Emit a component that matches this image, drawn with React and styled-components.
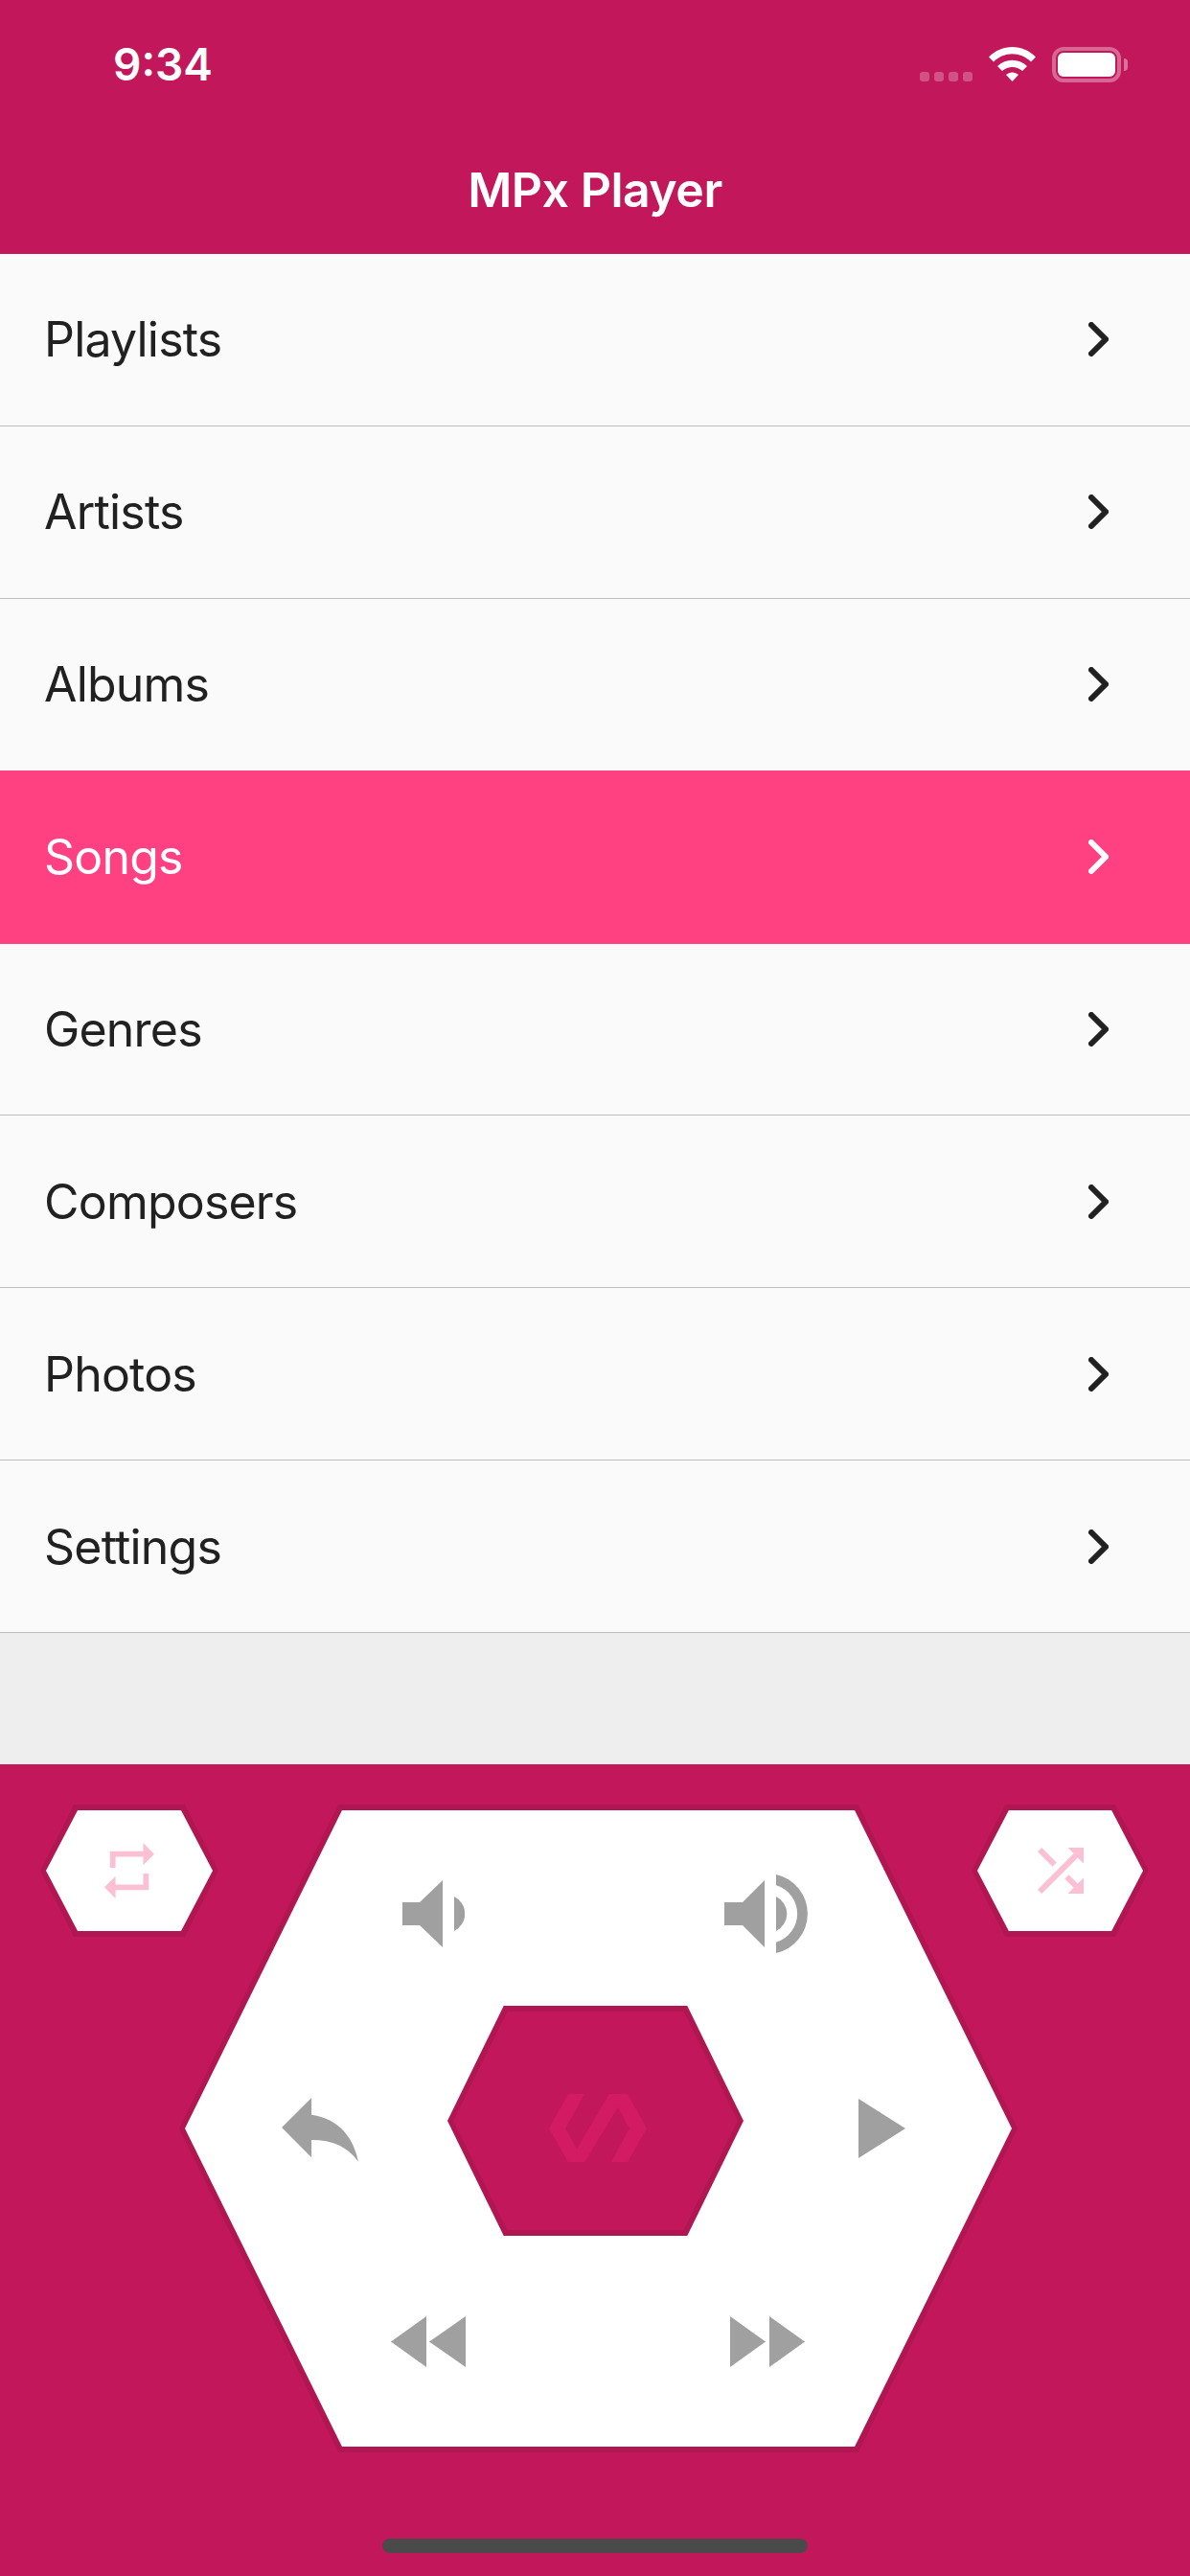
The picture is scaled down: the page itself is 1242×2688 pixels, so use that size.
import styled, { createGlobalStyle } from 'styled-components'

const GlobalStyle = createGlobalStyle`
  html, body {
    margin: 0;
    padding: 0;
    background: #eeeeee;
  }
  * { box-sizing: border-box; }
`

const Screen = styled.div`
  display: flex;
  flex-direction: column;
  width: 1242px;
  height: 2688px;
  overflow: hidden;
  font-family: Inter, "Liberation Sans", sans-serif;
  color: #212121;
  background: #eeeeee;
`

const Header = styled.header`
  display: flex;
  flex-direction: column;
  height: 265px;
  flex-shrink: 0;
  background: #c2185b;
  color: #fff;
`

const StatusBar = styled.div`
  display: flex;
  align-items: center;
  height: 134px;
  padding: 0 65px 0 118px;
`

const Time = styled.span`
  font-size: 46px;
  font-weight: 600;
  line-height: 1;
  flex: 1;
`

const Dots = styled.div`
  display: flex;
  gap: 5px;
  margin: 26px 17px 0 0;
`

const Dot = styled.i`
  display: block;
  width: 10px;
  height: 10px;
  border-radius: 3px;
  background: rgba(255, 255, 255, 0.25);
`

const Battery = styled.div`
  display: flex;
  align-items: center;
  width: 72px;
  height: 37px;
  margin-left: 17px;
  padding: 2px;
  border: 4px solid rgba(255, 255, 255, 0.35);
  border-radius: 12px;
`

const BatteryFill = styled.div`
  width: 100%;
  height: 100%;
  border-radius: 6px;
  background: #fff;
`

const BatteryNub = styled.div`
  width: 4px;
  height: 13px;
  margin-left: 3px;
  border-radius: 0 4px 4px 0;
  background: rgba(255, 255, 255, 0.4);
`

const Title = styled.h1`
  margin: 0;
  height: 131px;
  font-size: 50px;
  font-weight: 600;
  line-height: 128px;
  letter-spacing: -0.5px;
  text-align: center;
`

const Menu = styled.nav`
  display: flex;
  flex-direction: column;
  flex-shrink: 0;
`

const Row = styled.div`
  display: flex;
  align-items: center;
  justify-content: space-between;
  height: ${(props) => (props.$active ? '180.875px' : '179.875px')};
  margin-top: ${(props) => (props.$active ? '-1px' : '0')};
  padding: 0 85px 0 46px;
  border-bottom: 1px solid ${(props) => (props.$active ? '#ff4081' : '#bdbdbd')};
  background: ${(props) => (props.$active ? '#ff4081' : '#fafafa')};
  color: ${(props) => (props.$active ? '#fff' : '#212121')};
  font-size: 50px;
  letter-spacing: -0.8px;
  line-height: 1;
`

const Spacer = styled.div`
  flex: 1;
`

const Panel = styled.section`
  display: flex;
  flex-direction: column;
  align-items: center;
  height: 847px;
  flex-shrink: 0;
  padding-top: 42px;
  background: #c2185b;
`

const Deck = styled.div`
  display: flex;
  align-items: flex-start;
  width: 100%;
  padding-left: 42px;
`

const Hex = styled.div`
  width: ${(props) => props.$w}px;
  height: ${(props) => props.$h}px;
  margin-left: ${(props) => props.$ml || 0}px;
  flex-shrink: 0;
  padding: 6px;
  background: #b01651;
  clip-path: polygon(19% 0, 81% 0, 100% 50%, 81% 100%, 19% 100%, 0 50%);
`

const HexFace = styled.div`
  display: flex;
  flex-direction: column;
  align-items: center;
  justify-content: center;
  width: 100%;
  height: 100%;
  background: ${(props) => props.$color || '#fff'};
  clip-path: polygon(19% 0, 81% 0, 100% 50%, 81% 100%, 19% 100%, 0 50%);
`

const BigFace = styled(HexFace)`
  align-items: stretch;
  justify-content: flex-start;
`

const VolumeRow = styled.div`
  display: flex;
  align-items: center;
  gap: 271px;
  height: 82px;
  margin-top: 67px;
  padding-left: 227px;
`

const MiddleRow = styled.div`
  display: flex;
  align-items: center;
  height: 240px;
  margin-top: 55px;
  padding-left: 101px;
`

const SkipRow = styled.div`
  display: flex;
  gap: 276px;
  margin-top: 84px;
  padding-left: 215px;
`

const Glyph = styled.svg`
  display: block;
  flex-shrink: 0;
  fill: ${(props) => props.$fill || '#a0a0a0'};
  margin: ${(props) => props.$margin || '0'};
`

const HomeBar = styled.div`
  width: 444px;
  height: 15px;
  margin-top: 90px;
  border-radius: 8px;
  background: #4a4a4a;
`

function Chevron() {
  return (
    <svg width="21" height="36" viewBox="0 0 21 36">
      <polyline
        points="3,3 18,18 3,33"
        fill="none"
        stroke="currentColor"
        strokeWidth="6"
        strokeLinecap="round"
      />
    </svg>
  )
}

function Wifi() {
  return (
    <svg width="49" height="36" viewBox="0 0 49 36" fill="#fff">
      <path d="M0 10.5C13.5 -3.5 35.5 -3.5 49 10.5L44 15.5C33 4.5 16 4.5 5 15.5Z" />
      <path d="M9 20C18 11.5 31 11.5 40 20L35 25C28.5 19.5 20.5 19.5 14 25Z" />
      <path d="M18 29C22 25.5 27 25.5 31 29L24.5 36Z" />
    </svg>
  )
}

const items = ['Playlists', 'Artists', 'Albums', 'Songs', 'Genres', 'Composers', 'Photos', 'Settings']

export default function App() {
  return (
    <>
      <GlobalStyle />
      <Screen>
        <Header>
          <StatusBar>
            <Time>9:34</Time>
            <Dots>
              <Dot />
              <Dot />
              <Dot />
              <Dot />
            </Dots>
            <Wifi />
            <Battery>
              <BatteryFill />
            </Battery>
            <BatteryNub />
          </StatusBar>
          <Title>MPx Player</Title>
        </Header>
        <Menu>
          {items.map((item) => (
            <Row key={item} $active={item === 'Songs'}>
              {item}
              <Chevron />
            </Row>
          ))}
        </Menu>
        <Spacer />
        <Panel>
          <Deck>
            <Hex $w={186} $h={138}>
              <HexFace>
                <Glyph $fill="#fbc0d3" width="52" height="58" viewBox="3 2 18 20">
                  <path d="M7 7h10v3l4-4-4-4v3H5v6h2V7zm10 10H7v-3l-4 4 4 4v-3h12v-6h-2v4z" />
                </Glyph>
              </HexFace>
            </Hex>
            <Hex $w={875} $h={676} $ml={-41}>
              <BigFace>
                <VolumeRow>
                  <Glyph width="65" height="70" viewBox="0 0 65 70">
                    <path d="M0 23H18L42 0V70L18 47H0Z" />
                    <path d="M54 17A20 20 0 0 1 54 53Z" />
                  </Glyph>
                  <Glyph width="87" height="82" viewBox="0 0 87 82">
                    <path d="M0 29H19L42 6V76L19 53H0Z" />
                    <path d="M54 23A20 20 0 0 1 54 59Z" />
                    <path d="M54 0A42 42 0 0 1 54 82V70.7A31 31 0 0 0 54 11.3Z" />
                  </Glyph>
                </VolumeRow>
                <MiddleRow>
                  <Glyph $margin="18px 93px 0 0" width="80" height="66.6" viewBox="3 5 18 15">
                    <path d="M10 9V5l-7 7 7 7v-4.1c5 0 8.5 1.6 11 5.1-1-5-4-10-11-11z" />
                  </Glyph>
                  <Hex $w={309} $h={240}>
                    <HexFace $color="#c2185b">
                      <Glyph $fill="#d21b62" $margin="15px 0 0 5px" width="102" height="71" viewBox="0 0 102 71">
                        <path d="M20 0H37L17 36L29 57L63 0H82L102 36L82 71H65L84 36L72 14L37 71H20L0 36Z" />
                      </Glyph>
                    </HexFace>
                  </Hex>
                  <Glyph $margin="16px 0 0 120px" width="49" height="62" viewBox="0 0 49 62">
                    <path d="M0 0L49 31L0 62Z" />
                  </Glyph>
                </MiddleRow>
                <SkipRow>
                  <Glyph width="78" height="53" viewBox="0 0 78 53">
                    <path d="M37 0L0 26.5L37 53Z" />
                    <path d="M78 0L40 26.5L78 53Z" />
                  </Glyph>
                  <Glyph width="78" height="53" viewBox="0 0 78 53">
                    <path d="M0 0L37 26.5L0 53Z" />
                    <path d="M41 0L78 26.5L41 53Z" />
                  </Glyph>
                </SkipRow>
              </BigFace>
            </Hex>
            <Hex $w={185} $h={138} $ml={-48}>
              <HexFace>
                <Glyph $fill="#fbc0d3" width="48" height="48" viewBox="4 4 16 16">
                  <path d="M10.59 9.17L5.41 4 4 5.41l5.17 5.17 1.42-1.41zM14.5 4l2.04 2.04L4 18.59 5.41 20 17.96 7.46 20 9.5V4h-5.5zm.33 9.41l-1.41 1.41 3.13 3.13L14.5 20H20v-5.5l-2.04 2.04-3.13-3.13z" />
                </Glyph>
              </HexFace>
            </Hex>
          </Deck>
          <HomeBar />
        </Panel>
      </Screen>
    </>
  )
}
